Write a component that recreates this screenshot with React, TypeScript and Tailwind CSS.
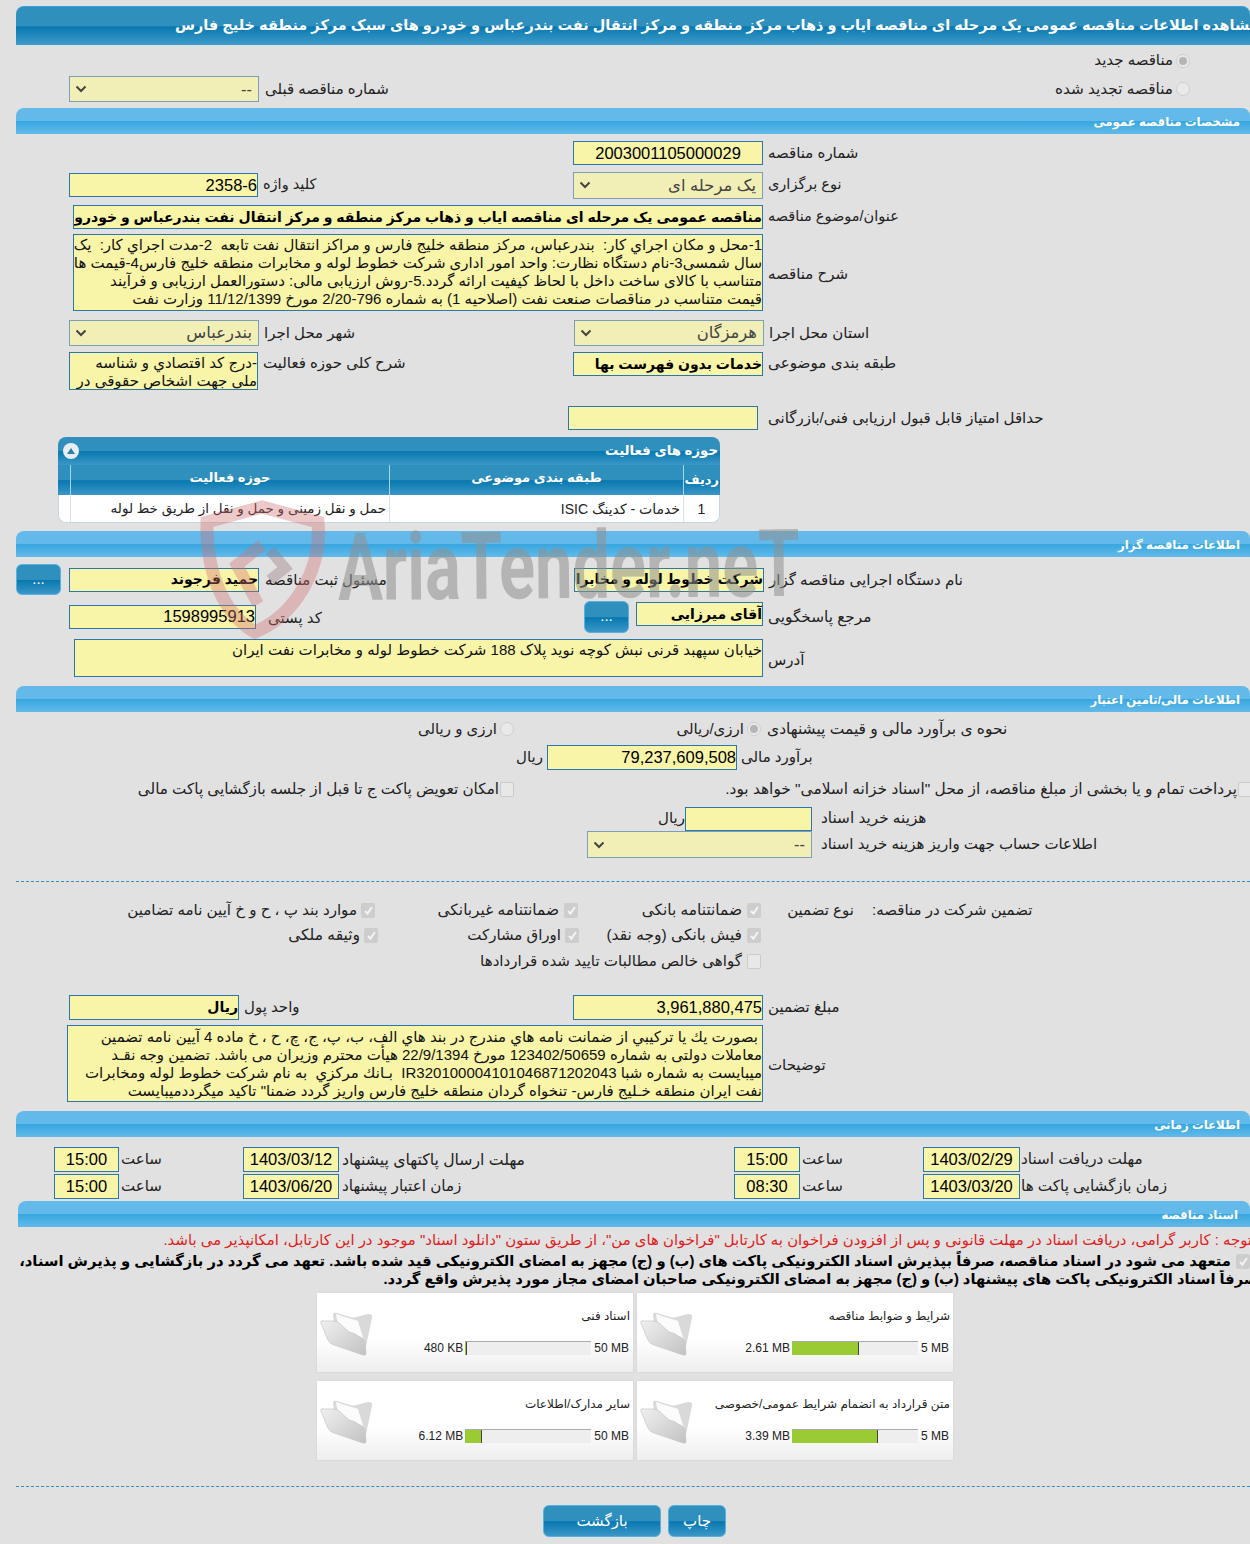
import React from "react";

const F = "font-['Liberation_Sans','DejaVu_Sans',sans-serif]";

function Sec({ t, cls = "" }: { t: string; cls?: string }) {
  return (
    <div className={`h-[26px] rounded-t-[8px] bg-[linear-gradient(#62b9ea_0%,#62b9ea_48%,#38a7e0_52%,#62bae9_100%)] flex items-center justify-end pr-[10px] pt-[2px] text-white font-bold text-[11.700px] ${cls}`}>
      <span dir="rtl">{t}</span>
    </div>
  );
}

function Inp({ cls = "", children, c = false, bold = false }: { cls?: string; children?: React.ReactNode; c?: boolean; bold?: boolean }) {
  return (
    <div dir="rtl" className={`shrink-0 bg-[#f8f5a8] border border-[#2b77ab] overflow-hidden whitespace-nowrap flex items-center text-black ${c ? "justify-center" : ""} ${bold ? "font-bold text-[14px]" : "text-[16.500px]"} ${cls}`}>
      {children}
    </div>
  );
}

function Sel({ cls = "", t }: { cls?: string; t: string }) {
  return (
    <div className={`shrink-0 bg-[#f2efb6] border border-[#7c9fb8] flex items-center justify-between pl-[5px] pr-[6px] text-[16.400px] text-[#444] ${cls}`}>
      <svg width="12" height="8" viewBox="0 0 12 8" fill="none" stroke="#444" strokeWidth="2"><path d="M1.500 1.500 6 6l4.500-4.500" /></svg>
      <span dir="rtl">{t}</span>
    </div>
  );
}

function L({ t, cls = "" }: { t: string; cls?: string }) {
  return (
    <span dir="rtl" className={`shrink-0 whitespace-nowrap text-[15px] text-[#222] ${cls}`}>
      {t}
    </span>
  );
}

function Radio({ on = false, cls = "" }: { on?: boolean; cls?: string }) {
  return (
    <span className={`shrink-0 w-[14px] h-[14px] rounded-full border border-[#cfcfcf] bg-[#e9e9e9] flex items-center justify-center ${cls}`}>
      {on && <span className="w-[8px] h-[8px] rounded-full bg-[#b5b5b5]" />}
    </span>
  );
}

function Cb({ on = false, cls = "" }: { on?: boolean; cls?: string }) {
  return (
    <span className={`shrink-0 w-[14px] h-[15px] rounded-[2px] flex items-center justify-center ${on ? "bg-[#cdcdcd]" : "bg-[#e8e8e8] border border-[#cbcbcb]"} ${cls}`}>
      {on && (
        <svg width="11" height="11" viewBox="0 0 11 11" fill="none" stroke="#f4f4f4" strokeWidth="2"><path d="M2 6l2.400 2.600L9 2" /></svg>
      )}
    </span>
  );
}

function Btn({ t, cls = "" }: { t: string; cls?: string }) {
  return (
    <div className={`shrink-0 rounded-[6px] border border-[#55b2e0] bg-[linear-gradient(#2f8fbd_0%,#2f8fbd_50%,#0878b0_52%,#3b97c6_100%)] text-white flex items-center justify-center ${cls}`}>
      <span dir="rtl">{t}</span>
    </div>
  );
}

function Folder() {
  return (
    <svg width="54" height="48" viewBox="0 0 54 48" className="shrink-0">
      <defs>
        <linearGradient id="fg" x1="0" y1="0" x2="1" y2="1">
          <stop offset="0" stopColor="#f0f0f0" />
          <stop offset="1" stopColor="#c2c2c2" />
        </linearGradient>
      </defs>
      <path d="M13 3Q14 1 17 2L30 6Q33 7 36 6L48 3Q53 3 52 7L45 40 15 20Z" fill="#d9d9d9" />
      <path d="M16 3 38 10 44 30 40 30 18 16Z" fill="#fbfbfb" />
      <path d="M1 12Q0 9 4 10L14 10Q17 10 20 13L28 20Q30 22 33 22L42 27Q45 29 45 32L46 42Q46 45 43 44L14 34Q10 33 8 29Z" fill="url(#fg)" stroke="#c4c4c4" strokeWidth=".7" />
    </svg>
  );
}

function Card({ title, l, r, p }: { title: string; l: string; r: string; p: number }) {
  return (
    <div className="w-[316px] h-full bg-[linear-gradient(#ffffff_0%,#ffffff_58%,#eeeeee_100%)] shadow-[0_0_2px_#d0d0d0] flex">
      <div className="ml-[3px] mt-[18px]"><Folder /></div>
      <div className="flex-1 flex flex-col">
        <div dir="rtl" className="mt-[14px] pr-[3px] text-[12px] text-[#222] whitespace-nowrap h-[18px]">{title}</div>
        <div className="mt-[14px] flex items-center justify-end pr-[4px] text-[12px] text-[#222]">
          <span className="mr-[2px]">{l}</span>
          <div className="w-[126px] h-[14px] bg-[#eeeeee] border-t border-[#aaa] shrink-0">
            <div className="h-[13px] bg-[#9acb33] border-r border-[#444]" style={{ width: `${p}%` }} />
          </div>
          <span className="ml-[3px] text-right">{r}</span>
        </div>
      </div>
    </div>
  );
}

const Dash = ({ cls = "" }: { cls?: string }) => <div className={`border-t border-dashed border-[#2f8fc4] ml-[16px] ${cls}`} />;

const TA = "shrink-0 bg-[#f8f5a8] border border-[#2b77ab] overflow-hidden text-[15px] leading-[18px] text-[#111] whitespace-pre";

export default function App() {
  return (
    <div className={`relative w-[1250px] h-[1544px] overflow-hidden bg-[#e1e1e1] ${F} text-[#222]`}>
      <div className="pt-[6px]">
        {/* title */}
        <div className="ml-[16px] w-[1234px] h-[39px] rounded-t-[8px] border-t border-[#3b9ddb] bg-[linear-gradient(#2f8fbd_0%,#2f8fbd_50%,#0878b0_52%,#3f9cc9_100%)] flex items-center overflow-hidden pl-[159px]">
          <span dir="rtl" className="whitespace-nowrap font-bold text-white text-[14.500px]">
            مشاهده اطلاعات مناقصه عمومی یک مرحله ای مناقصه ایاب و ذهاب مرکز منطقه و مرکز انتقال نفت بندرعباس و خودرو های سبک مرکز منطقه خلیج فارس
          </span>
        </div>

        <div className="mt-[3px] h-[25px] flex items-center justify-end pr-[60px]">
          <L t="مناقصه جدید" cls="mr-[3px]" /><Radio on />
        </div>
        <div className="h-[32px] flex items-center">
          <Sel t="--" cls="ml-[69px] w-[190px] h-[26px]" />
          <L t="شماره مناقصه قبلی" cls="ml-[6px]" />
          <div className="flex-1" />
          <L t="مناقصه تجدید شده" cls="mr-[3px] !text-[15.300px]" /><Radio cls="mr-[60px]" />
        </div>

        <Sec t="مشخصات مناقصه عمومی" cls="ml-[16px] mt-[3px]" />

        <div className="mt-[7px] h-[24px] flex items-center">
          <Inp c cls="ml-[573px] w-[190px] h-[24px]">2003001105000029</Inp>
          <L t="شماره مناقصه" cls="ml-[5px]" />
        </div>
        <div className="mt-[7px] h-[26px] flex items-center">
          <Inp cls="ml-[69px] w-[189px] h-[24px]">2358-6</Inp>
          <L t="کلید واژه" cls="ml-[5px] w-[310px] text-left !text-[14.500px]" />
          <Sel t="یک مرحله ای" cls="w-[190px] h-[27px]" />
          <L t="نوع برگزاری" cls="ml-[5px] !text-[14.500px]" />
        </div>
        <div className="mt-[7px] h-[24px] flex items-center">
          <Inp bold cls="ml-[73px] w-[690px] h-[24px]">مناقصه عمومی یک مرحله ای مناقصه ایاب و ذهاب مرکز منطقه و مرکز انتقال نفت بندرعباس و خودرو های سبک مرکز منطقه خلیج فارس</Inp>
          <L t="عنوان/موضوع مناقصه" cls="ml-[5px] !text-[14.500px]" />
        </div>
        <div className="mt-[5px] h-[77px] flex items-center">
          <div dir="rtl" className={`ml-[73px] w-[690px] h-[77px] pt-[1px] ${TA}`}>
            <div>1-محل و مکان اجراي کار:  بندرعباس، مرکز منطقه خلیج فارس و مراکز انتقال نفت تابعه  2-مدت اجراي کار:  یک</div>
            <div>سال شمسی3-نام دستگاه نظارت: واحد امور اداری شرکت خطوط لوله و مخابرات منطقه خلیج فارس4-قیمت ها</div>
            <div>متناسب با کالای ساخت داخل با لحاظ کیفیت ارائه گردد.5-روش ارزیابی مالی: دستورالعمل ارزیابی و فرآیند</div>
            <div>قیمت متناسب در مناقصات صنعت نفت (اصلاحیه 1) به شماره 796-2/20 مورخ 11/12/1399 وزارت نفت</div>
          </div>
          <L t="شرح مناقصه" cls="ml-[5px] mt-[3px]" />
        </div>
        <div className="mt-[8px] h-[27px] flex items-center">
          <Sel t="بندرعباس" cls="ml-[69px] w-[190px] h-[26px]" />
          <L t="شهر محل اجرا" cls="ml-[5px] w-[310px] text-left mt-[2px]" />
          <Sel t="هرمزگان" cls="w-[190px] h-[26px]" />
          <L t="استان محل اجرا" cls="ml-[5px] mt-[2px]" />
        </div>
        <div className="mt-[6px] h-[39px] flex items-start">
          <div dir="rtl" className={`ml-[69px] w-[189px] h-[38px] pt-[1px] ${TA}`}>
            <div>-درج کد اقتصادي و شناسه</div>
            <div>ملي جهت اشخاص حقوقي در</div>
          </div>
          <L t="شرح کلی حوزه فعالیت" cls="ml-[5px] w-[310px] text-left" />
          <Inp bold cls="w-[190px] h-[24px]">خدمات بدون فهرست بها</Inp>
          <L t="طبقه بندی موضوعی" cls="ml-[5px] !text-[15.200px]" />
        </div>
        <div className="mt-[15px] h-[24px] flex items-center">
          <Inp cls="ml-[568px] w-[190px] h-[24px]" />
          <L t="حداقل امتیاز قابل قبول ارزیابی فنی/بازرگانی" cls="ml-[10px]" />
        </div>

        {/* table */}
        <div className="mt-[7px] ml-[58px] w-[662px] h-[86px] rounded-[8px] overflow-hidden">
          <div className="h-[28px] bg-[linear-gradient(#2f8fbd_0%,#2f8fbd_50%,#0878b0_52%,#3b97c6_100%)] flex items-center justify-between pr-[2px] pl-[5px] text-white">
            <span className="w-[16px] h-[16px] rounded-full bg-[#e6eef3] flex items-center justify-center">
              <svg width="8" height="6" viewBox="0 0 8 6"><path d="M0 6 4 0l4 6z" fill="#2f7fa8" /></svg>
            </span>
            <span dir="rtl" className="font-bold text-[13.300px]">حوزه های فعالیت</span>
          </div>
          <div className="h-[30px] flex text-white font-bold text-[13px] bg-[linear-gradient(#2f8fbd_0%,#2f8fbd_50%,#0878b0_52%,#3b97c6_100%)]">
            <div className="w-[13px] border-r border-[#a9d3e8]" />
            <div className="w-[319px] border-r border-[#a9d3e8] flex items-center justify-center pb-[4px]"><span dir="rtl">حوزه فعالیت</span></div>
            <div className="w-[294px] border-r border-[#a9d3e8] flex items-center justify-center pb-[4px]"><span dir="rtl">طبقه بندی موضوعی</span></div>
            <div className="flex-1 flex items-center justify-end pr-[1px]"><span dir="rtl">ردیف</span></div>
          </div>
          <div className="h-[28px] flex text-[14px] text-[#222] bg-white border-x border-b border-[#c3d6e4] rounded-b-[8px]">
            <div className="w-[12px] border-r border-[#d8e2ea]" />
            <div dir="rtl" className="w-[319px] border-r border-[#d8e2ea] flex items-center pr-[3px] pt-[2px] whitespace-nowrap text-[13.500px]">حمل و نقل زمینی و حمل و نقل از طریق خط لوله</div>
            <div dir="rtl" className="w-[294px] border-r border-[#d8e2ea] flex items-center pr-[3px] pt-[2px]">خدمات - کدینگ ISIC</div>
            <div className="flex-1 flex items-center justify-center pt-[2px]">1</div>
          </div>
        </div>

        <Sec t="اطلاعات مناقصه گزار" cls="ml-[16px] mt-[8px]" />

        <div className="mt-[7px] h-[31px] flex items-center">
          <Btn t="..." cls="ml-[16px] w-[45px] h-[31px] text-[15px]" />
          <Inp bold cls="ml-[8px] w-[190px] h-[24px]">حمید فرجوند</Inp>
          <L t="مسئول ثبت مناقصه" cls="ml-[6px] w-[309px] text-left mt-[2px]" />
          <Inp bold cls="w-[190px] h-[24px]">شرکت خطوط لوله و مخابرات نفت ایران</Inp>
          <L t="نام دستگاه اجرایی مناقصه گزار" cls="ml-[5px] mt-[1px]" />
        </div>
        <div className="mt-[5px] h-[33px] flex items-center">
          <Inp cls="ml-[69px] w-[187px] h-[24px]">1598995913</Inp>
          <L t="کد پستی" cls="ml-[12px] w-[316px] text-left mt-[3px]" />
          <Btn t="..." cls="w-[45px] h-[32px] text-[15px]" />
          <Inp bold cls="ml-[7px] w-[127px] h-[24px] mt-[-5px]">آقای میرزایی</Inp>
          <L t="مرجع پاسخگویی" cls="ml-[5px] mt-[2px] !text-[15.300px]" />
        </div>
        <div className="mt-[5px] h-[39px] flex items-center">
          <div dir="rtl" className={`ml-[74px] w-[689px] h-[38px] pt-[1px] ${TA}`}>
            خیابان سپهبد قرنی نبش کوچه نوید پلاک 188 شرکت خطوط لوله و مخابرات نفت ایران
          </div>
          <L t="آدرس" cls="ml-[5px] mt-[6px]" />
        </div>

        <Sec t="اطلاعات مالی/تامین اعتبار" cls="ml-[16px] mt-[9px]" />

        <div className="mt-[6px] h-[22px] flex items-center">
          <L t="ارزی و ریالی" cls="ml-[420px] w-[77px]" />
          <Radio cls="ml-[3px]" />
          <L t="ارزی/ریالی" cls="ml-[163px] w-[67px]" />
          <Radio on cls="ml-[3px]" />
          <L t="نحوه ی برآورد مالی و قیمت پیشنهادی" cls="ml-[6px] !text-[15.500px]" />
        </div>
        <div className="mt-[4px] h-[26px] flex items-center">
          <L t="ریال" cls="ml-[519px] w-[24px]" />
          <Inp cls="ml-[4px] w-[190px] h-[25px]">79,237,609,508</Inp>
          <L t="برآورد مالی" cls="ml-[4px]" />
        </div>
        <div className="mt-[6px] h-[26px] flex items-center">
          <L t="امکان تعویض پاکت ج تا قبل از جلسه بازگشایی پاکت مالی" cls="ml-[138px] w-[361px] !text-[15.200px]" />
          <Cb cls="ml-[1px]" />
          <L t='پرداخت تمام و یا بخشی از مبلغ مناقصه، از محل "اسناد خزانه اسلامی" خواهد بود.' cls="ml-[211px] w-[512px] !text-[15.400px]" />
          <Cb cls="ml-[1px]" />
        </div>
        <div className="mt-[4px] h-[25px] flex items-center">
          <L t="ریال" cls="ml-[661px] w-[24px]" />
          <Inp cls="w-[127px] h-[24px]" />
          <L t="هزینه خرید اسناد" cls="ml-[9px] !text-[15.300px]" />
        </div>
        <div className="h-[27px] flex items-center">
          <Sel t="--" cls="ml-[587px] w-[225px] h-[27px]" />
          <L t="اطلاعات حساب جهت واریز هزینه خرید اسناد" cls="ml-[9px]" />
        </div>

        <Dash cls="mt-[23px]" />

        <div className="mt-[16px] h-[24px] flex items-center">
          <L t="موارد بند پ ، ح و خ آیین نامه تضامین" cls="ml-[130px] w-[227px] !text-[15.100px]" />
          <Cb on cls="ml-[4px]" />
          <L t="ضمانتنامه غیربانکی" cls="ml-[62px] w-[122px] !text-[15.400px]" />
          <Cb on cls="ml-[5px]" />
          <L t="ضمانتنامه بانکی" cls="ml-[63px] w-[101px] !text-[15.400px]" />
          <Cb on cls="ml-[5px]" />
          <L t="نوع تضمین" cls="ml-[26px] w-[67px]" />
          <L t="تضمین شرکت در مناقصه:" cls="ml-[18px]" />
        </div>
        <div className="h-[26px] flex items-center">
          <L t="وثیقه ملکی" cls="ml-[287px] w-[73px] !text-[15.500px]" />
          <Cb on cls="ml-[4px]" />
          <L t="اوراق مشارکت" cls="ml-[92px] w-[91px]" />
          <Cb on cls="ml-[4px]" />
          <L t="فیش بانکی (وجه نقد)" cls="ml-[26px] w-[137px] !text-[15.500px]" />
          <Cb on cls="ml-[5px]" />
        </div>
        <div className="h-[26px] flex items-center">
          <L t="گواهی خالص مطالبات تایید شده قراردادها" cls="ml-[482px] w-[260px] !text-[15.100px]" />
          <Cb cls="ml-[5px]" />
        </div>

        <div className="mt-[21px] h-[25px] flex items-center">
          <Inp bold cls="ml-[69px] w-[170px] h-[25px]">ریال</Inp>
          <L t="واحد پول" cls="ml-[5px] w-[329px] text-left" />
          <Inp cls="w-[190px] h-[25px]">3,961,880,475</Inp>
          <L t="مبلغ تضمین" cls="ml-[5px]" />
        </div>
        <div className="mt-[5px] h-[77px] flex items-center">
          <div dir="rtl" className={`ml-[67px] w-[696px] h-[77px] pt-[2px] ${TA}`}>
            <div> بصورت يك يا تركيبي از ضمانت نامه هاي مندرج در بند هاي الف، ب، پ، ج، چ، ح ، خ ماده 4 آیین نامه تضمین</div>
            <div>معاملات دولتی به شماره 123402/50659 مورخ 22/9/1394 هیأت محترم وزیران می باشد. تضمین وجه نقـد</div>
            <div>میبایست به شماره شبا IR320100004101046871202043  بـانك مركزي  به نام شركت خطوط لوله ومخابرات</div>
            <div>نفت ایران منطقه خـلیج فارس- تنخواه گردان منطقه خلیج فارس واریز گردد ضمنا" تاکید میگرددمیبایست</div>
          </div>
          <L t="توضیحات" cls="ml-[5px] mt-[3px]" />
        </div>

        <Sec t="اطلاعات زمانی" cls="ml-[16px] mt-[9px]" />

        <div className="mt-[10px] h-[25px] flex items-center">
          <Inp c cls="ml-[54px] w-[65px] h-[25px]">15:00</Inp>
          <L t="ساعت" cls="ml-[2px] w-[122px] text-left" />
          <Inp c cls="w-[96px] h-[25px]">1403/03/12</Inp>
          <L t="مهلت ارسال پاکتهای پیشنهاد" cls="ml-[3px] w-[392px] text-left !text-[15.700px]" />
          <Inp c cls="w-[66px] h-[25px]">15:00</Inp>
          <L t="ساعت" cls="ml-[2px] w-[121px] text-left" />
          <Inp c cls="w-[97px] h-[25px]">1403/02/29</Inp>
          <L t="مهلت دریافت اسناد" cls="ml-[1px] !text-[15.200px]" />
        </div>
        <div className="mt-[2px] h-[25px] flex items-center">
          <Inp c cls="ml-[54px] w-[65px] h-[25px]">15:00</Inp>
          <L t="ساعت" cls="ml-[2px] w-[122px] text-left" />
          <Inp c cls="w-[96px] h-[25px]">1403/06/20</Inp>
          <L t="زمان اعتبار پیشنهاد" cls="ml-[3px] w-[392px] text-left !text-[15.200px]" />
          <Inp c cls="w-[66px] h-[25px]">08:30</Inp>
          <L t="ساعت" cls="ml-[2px] w-[121px] text-left" />
          <Inp c cls="w-[97px] h-[25px]">1403/03/20</Inp>
          <L t="زمان بازگشایی پاکت ها" cls="ml-[1px] !text-[15.200px]" />
        </div>

        <Sec t="اسناد مناقصه" cls="ml-[18px] mt-[2px] !pr-[12px]" />

        <div className="mt-[4px] h-[18px] flex justify-end overflow-hidden">
          <span dir="rtl" className="whitespace-nowrap text-[14.900px] leading-[18px] text-[#e0201c] mr-[-2px]">
            توجه : کاربر گرامی، دریافت اسناد در مهلت قانونی و پس از افزودن فراخوان به کارتابل "فراخوان های من"، از طریق ستون "دانلود اسناد" موجود در این کارتابل، امکانپذیر می باشد.
          </span>
        </div>
        <div className="mt-[3px] h-[18px] flex items-center justify-end">
          <span dir="rtl" className="whitespace-nowrap font-bold text-[14.770px] leading-[18px] text-black">
            متعهد می شود در اسناد مناقصه، صرفاً بپذیرش اسناد الکترونیکی پاکت های (ب) و (ج) مجهز به امضای الکترونیکی قید شده باشد. تعهد می گردد در بازگشایی و پذیرش اسناد،
          </span>
          <Cb on cls="ml-[5px]" />
        </div>
        <div className="h-[18px] flex justify-end overflow-hidden">
          <span dir="rtl" className="whitespace-nowrap font-bold text-[14.700px] leading-[18px] text-black mr-[-8px]">
            صرفاً اسناد الکترونیکی پاکت های پیشنهاد (ب) و (ج) مجهز به امضای الکترونیکی صاحبان امضای مجاز مورد پذیرش واقع گردد.
          </span>
        </div>

        <div className="mt-[5px] ml-[317px] w-[636px] grid grid-cols-[316px_316px] gap-x-[4px] gap-y-[9px] auto-rows-[79px]">
          <Card title="اسناد فنی" l="480 KB" r="50 MB" p={1} />
          <Card title="شرایط و ضوابط مناقصه" l="2.61 MB" r="5 MB" p={53} />
          <Card title="سایر مدارک/اطلاعات" l="6.12 MB" r="50 MB" p={13.500} />
          <Card title="متن قرارداد به انضمام شرایط عمومی/خصوصی" l="3.39 MB" r="5 MB" p={68} />
        </div>

        <Dash cls="mt-[26px]" />

        <div className="mt-[18px] ml-[543px] flex gap-[7px]">
          <Btn t="بازگشت" cls="w-[118px] h-[32px] text-[15px]" />
          <Btn t="چاپ" cls="w-[58px] h-[32px] text-[15px]" />
        </div>
      </div>

      {/* watermark */}
      <div className="absolute left-[200px] top-[500px] w-[130px] h-[140px] pointer-events-none">
        <svg width="130" height="140" viewBox="0 0 130 140" fill="none">
          <path d="M7 22 62 7 118 22C122 70 95 115 55 132 25 115 6 75 7 22Z" stroke="#cf7070" strokeOpacity=".38" strokeWidth="13" />
          <path d="M62 45 37 65 58 104" stroke="#cf7070" strokeOpacity=".38" strokeWidth="12" />
          <path d="M70 50 85 68 70 80" stroke="#9a7a80" strokeOpacity=".4" strokeWidth="11" />
        </svg>
      </div>
      <div className="absolute left-[338px] top-[518px] origin-left pointer-events-none whitespace-nowrap text-[#909090]/55 font-['Roboto',sans-serif] font-bold text-[94px] leading-[100px] [transform:rotate(-0.5deg)_scaleX(0.71)]">
        AriaTender.neT
      </div>
    </div>
  );
}
